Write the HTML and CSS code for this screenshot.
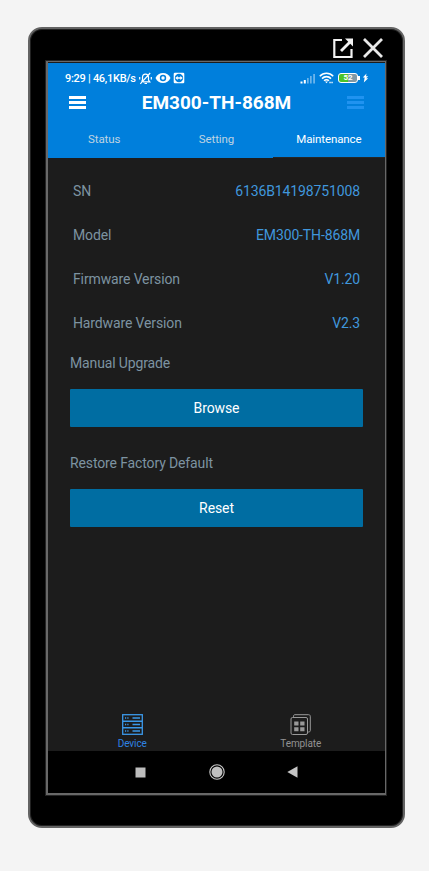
FILE: index.html
```html
<!DOCTYPE html>
<html lang="en">
<head>
<meta charset="utf-8">
<title>EM300-TH-868M</title>
<link rel="stylesheet" href="styles.css">
</head>
<body>
<div class="phone">
  <div class="window-bar">
    <svg width="21" height="21" viewBox="0 0 21 21" fill="none" stroke="#f2f2f2" stroke-width="2.2"><path d="M9 2H1.3V19H18.5V11"/><path d="M8 13L17 4" stroke-width="2.8"/><path d="M12 .5H20V8.5Z" fill="#f2f2f2" stroke="none"/></svg>
    <svg width="20" height="20" viewBox="0 0 20 20" stroke="#e8e8e8" stroke-width="2.8"><path d="M1 1L19 19M19 1L1 19"/></svg>
  </div>
  <div class="screen">
    <header class="header">
      <div class="status">
        <span class="clock">9:29 | 46,1KB/s</span>
        <svg class="bell" width="13" height="13" viewBox="0 0 13 13" fill="none" stroke="#fff" stroke-width="1.2"><path d="M2.5 9.5L3.5 8V5.5C3.5 3.5 5 2.2 6.5 2.2S9.5 3.5 9.5 5.5V8L10.8 9.8H4M5.5 11.5H8M1.3 11.8L11.2 1M.7 5V7.5M12.3 5V7.5"/></svg>
        <svg class="eye" width="16" height="12" viewBox="0 0 16 12"><path d="M.5 6C2 2.7 4.8 1 8 1S14 2.7 15.5 6C14 9.3 11.2 11 8 11S2 9.3 .5 6Z" fill="#fff"/><circle cx="8" cy="6" r="3.2" fill="#007fdc"/><circle cx="8" cy="6" r="1.7" fill="#fff"/></svg>
        <svg class="link" width="12" height="12" viewBox="0 0 12 12"><rect x=".7" y=".7" width="10.6" height="10.6" rx="1.2" fill="#fff"/><circle cx="6" cy="6" r="4.2" fill="#007fdc"/><path d="M2.2 6L4.7 3.9V5.3H7.3V3.9L9.8 6L7.3 8.1V6.7H4.7V8.1Z" fill="#fff"/></svg>
        <svg class="signal" width="16" height="11" viewBox="0 0 16 11" fill="#fff"><path d="M.5 8.5H2.5V10.5H.5ZM3.8 7H5.8V10.5H3.8Z"/><path d="M7 5H8.7V10.5H7ZM10 3H11.7V10.5H10ZM13.2 1H15V10.5H13.2Z" opacity=".42"/></svg>
        <svg class="wifi" width="15" height="12" viewBox="0 0 15 12" fill="none" stroke="#fff" stroke-width="1.6"><path d="M.8 4.2C4.5 .3 10.5 .3 14.2 4.2M3 6.6C5.5 4 9.5 4 12 6.6M5.1 8.8C6.5 7.4 8.5 7.4 9.9 8.8"/><path d="M6 9.5H9L7.5 11.3Z" fill="#fff" stroke="none"/><path d="M10.4 10.5H11.7M12.4 10.5H13.7"/></svg>
        <span class="battery"><span class="charge">52</span></span>
        <svg class="bolt" width="7" height="10" viewBox="0 0 7 10"><path d="M4.5 .5L.8 4.5H2.7L1.8 9.5L6.2 5.2H4.1L6.2 3.2H4Z" fill="#fff"/></svg>
      </div>
      <div class="title-row">
        <span class="menu"><i></i><i></i><i></i></span>
        <h1>EM300-TH-868M</h1>
        <span class="menu menu-dim"><i></i><i></i><i></i></span>
      </div>
      <nav class="tabs">
        <span class="tab">Status</span>
        <span class="tab">Setting</span>
        <span class="tab active">Maintenance</span>
      </nav>
    </header>
    <main class="content">
      <div class="row"><span>SN</span><b>6136B14198751008</b></div>
      <div class="row"><span>Model</span><b>EM300-TH-868M</b></div>
      <div class="row"><span>Firmware Version</span><b>V1.20</b></div>
      <div class="row"><span>Hardware Version</span><b>V2.3</b></div>
      <div class="label">Manual Upgrade</div>
      <button class="button">Browse</button>
      <div class="label restore">Restore Factory Default</div>
      <button class="button">Reset</button>
    </main>
    <nav class="bottom">
      <div class="item selected">
        <svg width="21" height="21" viewBox="0 0 21 21" fill="none" stroke="#3b98e8"><rect x=".7" y=".7" width="19.6" height="19.6" stroke-width="1.3"/><path d="M1 7.2H20M1 13.7H20" stroke-width="1.4"/><path d="M10.5 4H18M10.5 10.5H18M10.5 17H18" stroke-width="1.3"/><path d="M3 4H4.2M5.3 4H6.5M3 10.5H4.2M5.3 10.5H6.5M3 17H4.2M5.3 17H6.5" stroke-width="1.3"/></svg>
        <span>Device</span>
      </div>
      <div class="item">
        <svg width="21" height="21" viewBox="0 0 21 21" fill="none" stroke="#999"><rect x="1" y="3.5" width="16.5" height="17" rx="1.5"/><path d="M3.5 3.3V2.2C3.5 1.2 4 .7 5 .7H18.5C19.5 .7 20.3 1.3 20.3 2.3V16.5C20.3 17.5 19.5 18 18.5 18H17.7"/><path d="M4.2 7.5H8.5V11.5H4.2ZM10.2 7.5H14.5V11.5H10.2ZM4.2 13.3H8.5V17.3H4.2ZM10.2 13.3H14.5V17.3H10.2Z" fill="#999" stroke="none"/></svg>
        <span>Template</span>
      </div>
    </nav>
    <div class="system-nav">
      <svg width="11" height="11" viewBox="0 0 11 11"><path d="M.5 .5H10.5V10.5H.5Z" fill="#bdbdbd"/></svg>
      <svg width="16" height="16" viewBox="0 0 16 16"><circle cx="8" cy="8" r="7.2" fill="none" stroke="#c8c8c8" stroke-width="1.1"/><circle cx="8" cy="8" r="5.5" fill="#c0c0c0"/></svg>
      <svg width="11" height="12" viewBox="0 0 11 12"><path d="M.3 6L10.5 .3V11.7Z" fill="#c5c5c5"/></svg>
    </div>
  </div>
</div>
</body>
</html>
```
FILE: styles.css
```css
* { box-sizing: border-box; }
body {
  margin: 0;
  height: 871px;
  padding: 27px 0 0 28px;
  overflow: hidden;
  background: #f4f4f4;
  font-family: Roboto, "Liberation Sans", sans-serif;
}
svg { display: block; flex: none; }
.phone {
  width: 377px;
  height: 801px;
  border: 2px solid #636363;
  border-radius: 14px;
  background: #000;
  box-shadow: inset 0 0 0 1px #222;
  padding-left: 16px;
}
.window-bar {
  height: 32px;
  display: flex;
  align-items: center;
  justify-content: flex-end;
  gap: 9px;
  padding: 6px 20px 0 0;
}
.screen {
  width: 340px;
  height: 734px;
  border: 1px solid #686868;
  outline: 1px solid #242424;
  border-left-width: 2px;
  border-bottom-width: 2px;
  padding-top: 1px;
  background: #1c1c1c;
  display: flex;
  flex-direction: column;
}
.header {
  height: 95px;
  background: #007fdc;
  color: #fff;
}
.status {
  height: 26px;
  display: flex;
  align-items: center;
  padding: 4px 16px 0 17px;
}
.clock {
  font-size: 11px;
  font-weight: 500;
  letter-spacing: -.28px;
  white-space: nowrap;
  width: 71px;
}
.bell { margin-left: 3px; }
.eye { margin-left: 3px; }
.link { margin-left: 2px; }
.signal { margin-left: auto; }
.wifi { margin: 0 4px 0 3px; }
.battery {
  width: 20px;
  height: 10px;
  border: 1.5px solid #fff;
  border-radius: 3px;
  background: linear-gradient(90deg, #4cc32a 50%, #8199a5 50%);
  position: relative;
}
.battery::after {
  content: "";
  position: absolute;
  right: -3px;
  top: 2px;
  width: 2px;
  height: 4px;
  background: #fff;
}
.charge {
  display: block;
  font-size: 8px;
  font-weight: 700;
  line-height: 8px;
  text-align: center;
}
.bolt { margin-left: 4px; }
.title-row {
  height: 28px;
  display: flex;
  align-items: center;
  justify-content: space-between;
  padding: 0 21px;
}
.title-row .menu { margin-top: -2px; }
h1 {
  margin: 0;
  font-size: 19px;
  line-height: 24px;
  font-weight: 700;
}
.menu {
  width: 17px;
  height: 13px;
  display: flex;
  flex-direction: column;
  justify-content: space-between;
}
.menu i { height: 3px; background: #fff; }
.menu-dim i { background: #2093f0; }
.tabs {
  height: 41px;
  display: grid;
  grid-template-columns: repeat(3, 1fr);
}
.tab {
  text-align: center;
  font-size: 11.5px;
  line-height: 44px;
  height: 41px;
  color: #bfd3e2;
  letter-spacing: -.1px;
}
.active { color: #fff; border-bottom: 1px solid #252525; }
.content { padding: 11px 22px 0; flex: 1; }
.row {
  height: 44px;
  display: flex;
  align-items: center;
  justify-content: space-between;
  padding: 0 3px;
  font-size: 14px;
  letter-spacing: -.13px;
  color: #7d93a1;
}
.row b { font-weight: 400; color: #4097dc; }
.label {
  height: 44px;
  line-height: 36px;
  font-size: 14px;
  letter-spacing: -.13px;
  color: #7d93a1;
}
.button {
  display: block;
  width: 293px;
  height: 38px;
  border: 0;
  border-radius: 1px;
  padding: 0;
  background: #006da2;
  color: #fff;
  font: 400 14px Roboto, sans-serif;
  letter-spacing: -.1px;
}
.restore { height: 62px; line-height: 73px; }
.bottom {
  height: 37px;
  display: grid;
  grid-template-columns: 1fr 1fr;
  font-size: 10px;
  line-height: 13px;
  letter-spacing: -.1px;
  color: #929292;
}
.item {
  display: flex;
  flex-direction: column;
  align-items: center;
  gap: 2px;
}
.selected { color: #2f83e4; }
.system-nav {
  height: 42px;
  background: #000;
  display: flex;
  align-items: center;
  justify-content: space-between;
  padding: 0 87px;
}
```
